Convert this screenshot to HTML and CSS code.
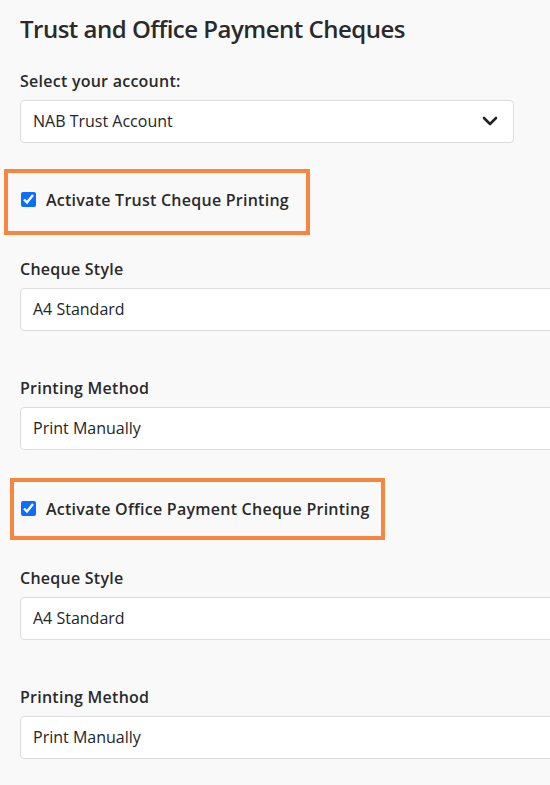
FILE: index.html
```html
<!DOCTYPE html>
<html lang="en">
<head>
    <meta charset="UTF-8">
    <meta name="viewport" content="width=device-width, initial-scale=1.0">
    <title>Trust and Office Payment Cheques</title>
    <link rel="stylesheet" href="styles.css">
</head>
<body>
    <div class="page">
        <h1>Trust and Office Payment Cheques</h1>

        <label class="field-label" for="account">Select your account:</label>
        <div class="select" id="account">
            <span>NAB Trust Account</span>
            <svg class="chevron" width="16" height="10" viewBox="0 0 16 10">
                <path d="M2 2 L8 8 L14 2" fill="none" stroke="#222" stroke-width="2.6" stroke-linecap="round" stroke-linejoin="round"/>
            </svg>
        </div>

        <!-- Trust cheques -->
        <div class="check-box check-box-trust">
            <input type="checkbox" id="trustPrint" checked>
            <label for="trustPrint">Activate Trust Cheque Printing</label>
        </div>

        <label class="field-label" for="trustStyle">Cheque Style</label>
        <div class="input wide" id="trustStyle">A4 Standard</div>

        <label class="field-label spaced" for="trustMethod">Printing Method</label>
        <div class="input wide" id="trustMethod">Print Manually</div>

        <!-- Office payment cheques -->
        <div class="check-box check-box-office">
            <input type="checkbox" id="officePrint" checked>
            <label for="officePrint">Activate Office Payment Cheque Printing</label>
        </div>

        <label class="field-label" for="officeStyle">Cheque Style</label>
        <div class="input wide" id="officeStyle">A4 Standard</div>

        <label class="field-label spaced" for="officeMethod">Printing Method</label>
        <div class="input wide" id="officeMethod">Print Manually</div>
    </div>
</body>
</html>
```

FILE: styles.css
```css
/* Global Styling */
html, body {
    overflow: hidden;
}

body {
    margin: 0;
    padding: 0;
    background-color: #f9f9f9;
    font-family: 'Open Sans', 'Noto Sans', sans-serif;
    font-size: 16px;
    color: #212529;
}

.page {
    padding: 15px 0 0 20px;
}

h1 {
    margin: 0 0 25px 0;
    font-size: 24px;
    font-weight: 600;
    line-height: 28.8px;
    letter-spacing: -0.5px;
    color: #2a2a2a;
}

.field-label {
    display: block;
    font-weight: 600;
    line-height: 24px;
    letter-spacing: 0.25px;
    margin-bottom: 7px;
    color: #2a2a2a;
}

.field-label.spaced {
    margin-top: 45px;
}

.select,
.input {
    box-sizing: border-box;
    height: 43px;
    padding: 0 15px 0 12px;
    background-color: #fff;
    border: 1px solid #dcdcdc;
    border-radius: 4px;
    display: flex;
    align-items: center;
    line-height: 24px;
}

.select {
    width: 494px;
    justify-content: space-between;
}

.input.wide {
    width: 580px;
}

.check-box {
    display: inline-flex;
    align-items: center;
    gap: 10px;
    border: 4px solid #f5853f;
    line-height: 24px;
    font-weight: 600;
    letter-spacing: 0.25px;
    color: #2a2a2a;
}

.check-box input {
    width: 15px;
    height: 15px;
    margin: 0;
    accent-color: #0b6efd;
}

.check-box-trust {
    margin: 26px 0 22px -16px;
    padding: 15px 17px 19px 13px;
}

.check-box-office {
    margin: 28px 0 26px -10px;
    padding: 15px 11px 15px 7px;
}
```
